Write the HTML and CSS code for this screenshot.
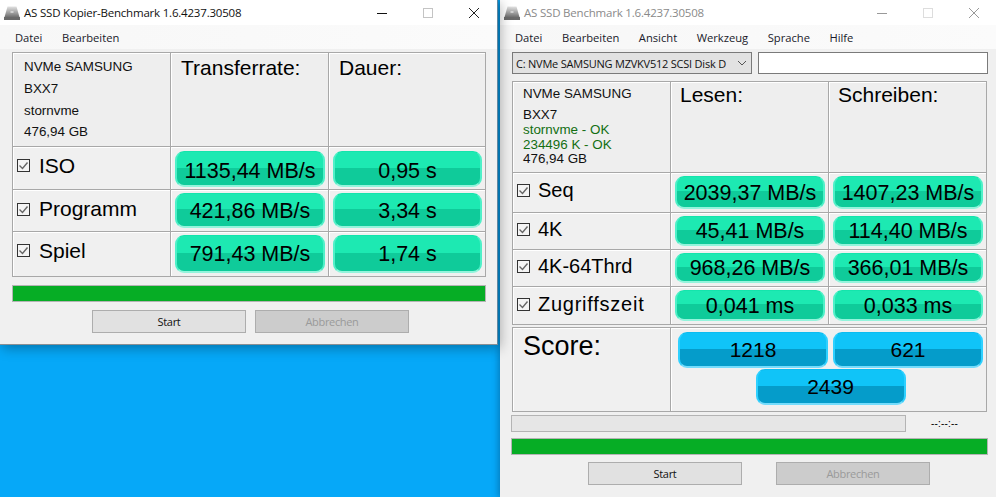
FILE: index.html
```html
<!DOCTYPE html>
<html lang="de">
<head>
<meta charset="utf-8">
<title>AS SSD</title>
<link rel="stylesheet" href="styles.css">
</head>
<body>
<svg class="defs" width="0" height="0" aria-hidden="true">
  <defs>
    <linearGradient id="disk" x1="0" y1="0" x2="0" y2="1"><stop offset="0" stop-color="#e2e2e2"/><stop offset=".55" stop-color="#999"/><stop offset="1" stop-color="#5a5a5a"/></linearGradient>
    <symbol id="ico" viewBox="0 0 16 14"><path d="M3.5 0.5h9L16 13H0z" fill="url(#disk)"/><rect x="0" y="11" width="16" height="3" fill="#6a6a6a"/><rect x="6.5" y="5" width="3" height="2" fill="#eee" opacity=".6"/></symbol>
    <symbol id="chk" viewBox="0 0 13 13"><rect x=".5" y=".5" width="12" height="12" fill="#f4f4f4" stroke="#333"/><path d="M2.5 6.5l3 3 5-6" fill="none" stroke="#666" stroke-width="1.4"/></symbol>
  </defs>
</svg>

<section class="window win-copy">
  <header class="title">
    <svg class="appicon" width="16" height="14"><use href="#ico"/></svg>
    <span class="title-text">AS SSD Kopier-Benchmark 1.6.4237.30508</span>
    <div class="controls">
      <svg width="12" height="12" viewBox="0 0 12 12"><path d="M1 6.5h10" stroke="#111" fill="none"/></svg>
      <svg width="12" height="12" viewBox="0 0 12 12"><rect x="1.5" y="1.5" width="9" height="9" fill="none" stroke="#c4c4c4"/></svg>
      <svg width="12" height="12" viewBox="0 0 12 12"><path d="M1 1l10 10M11 1L1 11" stroke="#222" fill="none"/></svg>
    </div>
  </header>
  <nav class="menu"><span>Datei</span><span>Bearbeiten</span></nav>
  <main class="content">
    <div class="table table-copy">
      <div class="cell info">
        <span class="line line-a">NVMe SAMSUNG</span>
        <span class="line line-b">BXX7</span>
        <span class="line line-b">stornvme</span>
        <span class="line line-c">476,94 GB</span>
      </div>
      <div class="cell head">Transferrate:</div>
      <div class="cell head">Dauer:</div>

      <div class="cell label label-iso"><svg class="check" width="13" height="13"><use href="#chk"/></svg>ISO</div>
      <div class="cell val val-low"><div class="pill pill-low">1135,44 MB/s</div></div>
      <div class="cell val val-low"><div class="pill pill-low">0,95 s</div></div>

      <div class="cell label"><svg class="check" width="13" height="13"><use href="#chk"/></svg>Programm</div>
      <div class="cell val"><div class="pill">421,86 MB/s</div></div>
      <div class="cell val"><div class="pill">3,34 s</div></div>

      <div class="cell label label-up"><svg class="check" width="13" height="13"><use href="#chk"/></svg>Spiel</div>
      <div class="cell val"><div class="pill">791,43 MB/s</div></div>
      <div class="cell val"><div class="pill">1,74 s</div></div>
    </div>
    <div class="progress full"><div class="fill"></div></div>
    <div class="buttons"><button class="btn">Start</button><button class="btn off">Abbrechen</button></div>
  </main>
</section>

<section class="window win-main">
  <header class="title inactive">
    <svg class="appicon" width="16" height="14"><use href="#ico"/></svg>
    <span class="title-text">AS SSD Benchmark 1.6.4237.30508</span>
    <div class="controls">
      <svg width="12" height="12" viewBox="0 0 12 12"><path d="M1 6.5h10" stroke="#999" fill="none"/></svg>
      <svg width="12" height="12" viewBox="0 0 12 12"><rect x="1.5" y="1.5" width="9" height="9" fill="none" stroke="#ddd"/></svg>
      <svg width="12" height="12" viewBox="0 0 12 12"><path d="M1 1l10 10M11 1L1 11" stroke="#999" fill="none"/></svg>
    </div>
  </header>
  <nav class="menu"><span>Datei</span><span>Bearbeiten</span><span>Ansicht</span><span>Werkzeug</span><span>Sprache</span><span>Hilfe</span></nav>
  <main class="content">
    <div class="selectors">
      <div class="combo"><span class="combo-text">C: NVMe SAMSUNG MZVKV512 SCSI Disk D</span><svg width="10" height="6" viewBox="0 0 10 6"><path d="M1 1l4 4 4-4" fill="none" stroke="#555"/></svg></div>
      <div class="textbox"></div>
    </div>
    <div class="table table-main">
      <div class="cell info info-main">
        <span class="line line-m1">NVMe SAMSUNG</span>
        <span class="line line-m2">BXX7</span>
        <span class="line line-m3 ok">stornvme - OK</span>
        <span class="line line-m3 ok">234496 K - OK</span>
        <span class="line line-m3">476,94 GB</span>
      </div>
      <div class="cell head">Lesen:</div>
      <div class="cell head">Schreiben:</div>

      <div class="cell label"><svg class="check" width="13" height="13"><use href="#chk"/></svg>Seq</div>
      <div class="cell val"><div class="pill">2039,37 MB/s</div></div>
      <div class="cell val"><div class="pill">1407,23 MB/s</div></div>

      <div class="cell label"><svg class="check" width="13" height="13"><use href="#chk"/></svg>4K</div>
      <div class="cell val"><div class="pill">45,41 MB/s</div></div>
      <div class="cell val"><div class="pill">114,40 MB/s</div></div>

      <div class="cell label"><svg class="check" width="13" height="13"><use href="#chk"/></svg>4K-64Thrd</div>
      <div class="cell val"><div class="pill">968,26 MB/s</div></div>
      <div class="cell val"><div class="pill">366,01 MB/s</div></div>

      <div class="cell label label-wide"><svg class="check" width="13" height="13"><use href="#chk"/></svg>Zugriffszeit</div>
      <div class="cell val"><div class="pill">0,041 ms</div></div>
      <div class="cell val"><div class="pill">0,033 ms</div></div>
    </div>
    <div class="table table-score">
      <div class="cell score-title">Score:</div>
      <div class="cell score-vals">
        <div class="pill blue">1218</div>
        <div class="pill blue">621</div>
        <div class="pill blue total">2439</div>
      </div>
    </div>
    <div class="time-row">
      <div class="progress empty"></div>
      <span class="time">--:--:--</span>
    </div>
    <div class="progress full main-full"><div class="fill"></div></div>
    <div class="buttons"><button class="btn">Start</button><button class="btn off wide-gap">Abbrechen</button></div>
  </main>
</section>
</body>
</html>
```

FILE: styles.css
```css
* { box-sizing: border-box; }
html, body { margin: 0; height: 100%; }
body {
  position: relative;
  width: 996px;
  height: 497px;
  overflow: hidden;
  background: #06a8f8;
  font-family: "Liberation Sans", Arial, sans-serif;
  color: #000;
}
.defs { position: absolute; }

.window { position: absolute; top: 0; display: flex; flex-direction: column; background: #f0f0f0; }
.win-copy { left: 0; width: 498px; height: 345px; border-right: 1px solid #5f86a0; border-bottom: 1px solid #8a8f94; box-shadow: 2px 3px 12px rgba(0,0,0,.32); z-index: 1; }
.win-main { left: 500px; width: 496px; height: 497px; box-shadow: -2px 0 6px rgba(0,50,90,.35); }

.title { display: flex; align-items: center; height: 25px; padding-left: 4px; background: #fff; font: 11.5px "Open Sans", "Noto Sans", sans-serif; color: #111; }
.title.inactive { color: #8a8a8a; }
.appicon { margin-right: 4px; }
.title-text { white-space: nowrap; letter-spacing: -.2px; }
.controls { margin-left: auto; display: flex; gap: 34px; padding-right: 17px; align-items: center; }
.win-main .controls { padding-right: 16px; }

.menu { display: flex; gap: 19.5px; height: 24px; align-items: center; padding-left: 15px; background: linear-gradient(90deg, #f7f7f7, #fbfbfb); font: 11.2px "Open Sans", "Noto Sans", sans-serif; color: #1a1a2a; }

.content { flex: 1; padding: 3px 0 0 12px; }

.table { display: grid; width: 474px; border-left: 1px solid #a8a8a8; border-top: 1px solid #a8a8a8; }
.table-copy { grid-template-columns: 158px 158px 157px; grid-template-rows: 94px 43px 42px 45px; }
.table-main { grid-template-columns: 158px 158px 158px; grid-template-rows: 91px 40px 37px 37px 38px; margin-top: 7px; width: 475px; }
.table-score { grid-template-columns: 158px 316px; grid-template-rows: 84px; margin-top: 2px; width: 475px; }

.cell { border-right: 1px solid #a8a8a8; border-bottom: 1px solid #a8a8a8; box-shadow: inset 1px 1px 0 #fff; background: #eeeeee; min-width: 0; }

.info { display: flex; flex-direction: column; padding: 3px 0 0 11px; font-size: 13.4px; }
.line { display: block; white-space: nowrap; color: #111; }
.line-a { line-height: 22px; }
.line-b { line-height: 22px; }
.line-c { line-height: 16px; margin-top: 2px; }
.info-main { padding: 2px 0 0 10px; }
.line-m1 { line-height: 20px; }
.line-m2 { line-height: 22px; margin-bottom: -3px; }
.line-m3 { line-height: 14.5px; }
.ok { color: #136e13; }

.head { font-size: 21px; padding: 2px 0 0 10px; line-height: 26px; }
.table-main .head { padding: 0 0 0 9px; }

.label { display: flex; align-items: center; gap: 9px; padding-left: 4px; font-size: 21px; padding-bottom: 3px; white-space: nowrap; background: #f0f0f0; }
.label-iso { padding-bottom: 5px; }
.label-up { padding-bottom: 7px; }
.table-main .label { font-size: 20px; gap: 8px; padding-bottom: 4px; }
.table-main .label-wide { letter-spacing: .75px; padding-bottom: 3px; }
.val { padding: 3px 3px 3px 4px; background: #f0f0f0; display: flex; }
.val-low { padding-top: 4px; padding-bottom: 2px; }

.pill {
  flex: 1;
  display: flex;
  align-items: center;
  justify-content: center;
  border-radius: 9px;
  font-size: 21.5px;
  white-space: nowrap;
  padding-top: 2px;
  border: 2px solid #4ff0c8;
  border-top: 1px solid #14e4ac;
  border-bottom: 2px solid #93f4dc;
  background: linear-gradient(#1de9b2 0, #1de9b2 48%, #0fcb9a 48%, #0fcb9a 100%);
}
.pill-low { padding-top: 5px; }
.pill.blue {
  flex: 0 0 150px;
  height: 36px;
  padding-top: 0;
  font-size: 21px;
  border-color: #2ed0ff;
  border-top-color: #0cbcf0;
  border-bottom-color: #74dcfc;
  background: linear-gradient(#10c4f8 0, #10c4f8 48%, #059cca 48%, #059cca 100%);
}

.score-title { font-size: 27px; padding: 2px 0 0 10px; line-height: 32px; background: #f0f0f0; }
.score-vals { display: flex; flex-wrap: wrap; justify-content: center; gap: 1px 5px; padding: 4px 3px 0 7px; align-content: flex-start; background: #f0f0f0; }

.progress { height: 17px; border: 1px solid #b4b4b4; background: #e6e6e6; }
.progress.full { width: 474px; margin-top: 8px; }
.fill { height: 100%; background: #06ad25; }
.win-main .main-full { margin: 6px 0 0 -1px; width: 477px; }

.buttons { display: flex; gap: 9px; margin-top: 8px; padding-left: 80px; }
.win-main .buttons { padding-left: 76px; margin-top: 7px; }
.btn { width: 154px; height: 23px; padding: 0; border: 1px solid #adadad; background: #e1e1e1; font: 11px "Open Sans", "Noto Sans", sans-serif; letter-spacing: -.03em; color: #111; }
.btn.off { background: #cccccc; color: #9a9a9a; }
.wide-gap { margin-left: 25px; }

.selectors { display: flex; gap: 6px; height: 22px; }
.combo { display: flex; align-items: center; justify-content: space-between; width: 240px; padding: 0 4px 0 3px; border: 1px solid #7a7a7a; background: #e2e2e2; font: 11px "Open Sans", "Noto Sans", sans-serif; letter-spacing: -.02em; color: #111; }
.combo-text { width: 217px; overflow: hidden; white-space: nowrap; }
.textbox { width: 230px; border: 1px solid #7a7a7a; background: #fff; }

.time-row { display: flex; align-items: center; margin: 3px 0 0 -1px; }
.progress.empty { width: 395px; }
.time { margin-left: 25px; font-size: 10px; letter-spacing: .02em; }
```
